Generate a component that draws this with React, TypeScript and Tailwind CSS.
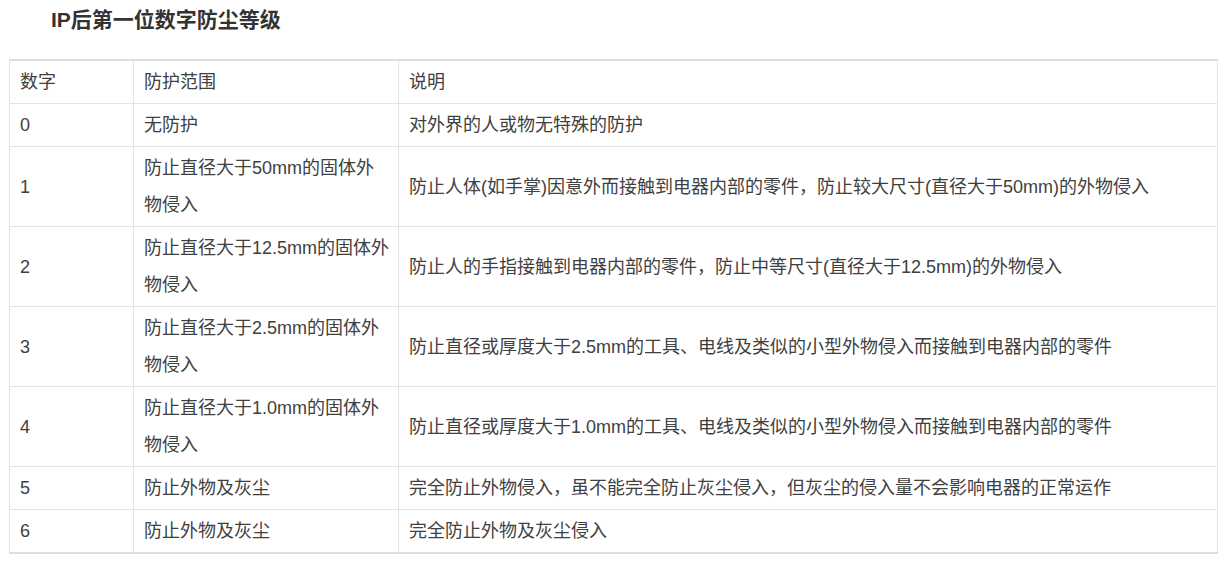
const rows: { num: string; range: string[]; desc: string }[] = [
  { num: '0', range: ['无防护'], desc: '对外界的人或物无特殊的防护' },
  {
    num: '1',
    range: ['防止直径大于50mm的固体外', '物侵入'],
    desc: '防止人体(如手掌)因意外而接触到电器内部的零件，防止较大尺寸(直径大于50mm)的外物侵入',
  },
  {
    num: '2',
    range: ['防止直径大于12.5mm的固体外', '物侵入'],
    desc: '防止人的手指接触到电器内部的零件，防止中等尺寸(直径大于12.5mm)的外物侵入',
  },
  {
    num: '3',
    range: ['防止直径大于2.5mm的固体外', '物侵入'],
    desc: '防止直径或厚度大于2.5mm的工具、电线及类似的小型外物侵入而接触到电器内部的零件',
  },
  {
    num: '4',
    range: ['防止直径大于1.0mm的固体外', '物侵入'],
    desc: '防止直径或厚度大于1.0mm的工具、电线及类似的小型外物侵入而接触到电器内部的零件',
  },
  { num: '5', range: ['防止外物及灰尘'], desc: '完全防止外物侵入，虽不能完全防止灰尘侵入，但灰尘的侵入量不会影响电器的正常运作' },
  { num: '6', range: ['防止外物及灰尘'], desc: '完全防止外物及灰尘侵入' },
];

const cell = 'border border-[#e3e3e3] pl-[10px] pr-[8px] pt-[3px] pb-[2px] align-middle';

export default function App() {
  return (
    <div
      className="w-[1230px] h-[561px] bg-white text-[#404040]"
      style={{ fontFamily: '"Liberation Sans", "Noto Sans CJK SC", sans-serif' }}
    >
      <h2 className="pl-[51px] pt-[6px] text-[21px] leading-[28px] font-bold text-[#333]">
        IP后第一位数字防尘等级
      </h2>

      <div className="mt-[25px] ml-[9px]">
        <table className="table-fixed border-collapse w-[1209px] border-y-2 border-x border-[#dedede] text-[18px] leading-[37px]">
          <colgroup>
            <col className="w-[124px]" />
            <col className="w-[265px]" />
            <col />
          </colgroup>
          <tbody>
            <tr>
              <td className={cell}>数字</td>
              <td className={cell}>防护范围</td>
              <td className={cell}>说明</td>
            </tr>
            {rows.map((r) => (
              <tr key={r.num}>
                <td className={cell}>{r.num}</td>
                <td className={cell}>
                  {r.range.map((line) => (
                    <div key={line} className="whitespace-nowrap">
                      {line}
                    </div>
                  ))}
                </td>
                <td className={`${cell} whitespace-nowrap`}>{r.desc}</td>
              </tr>
            ))}
          </tbody>
        </table>
      </div>
    </div>
  );
}
